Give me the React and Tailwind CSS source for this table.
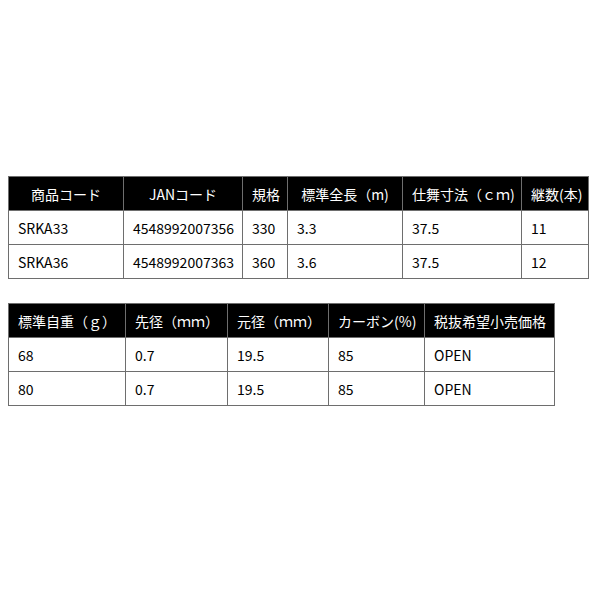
const specs = {
  widths: [115, 119, 45, 115, 119, 67],
  head: ["商品コード", "JANコード", "規格", "標準全長（m)", "仕舞寸法（ｃｍ)", "継数(本)"],
  rows: [
    ["SRKA33", "4548992007356", "330", "3.3", "37.5", "11"],
    ["SRKA36", "4548992007363", "360", "3.6", "37.5", "12"],
  ],
  center: true,
};

const weights = {
  widths: [117, 102, 101, 96, 130],
  head: ["標準自重（ｇ）", "先径（ｍｍ）", "元径（ｍｍ）", "カーボン(%)", "税抜希望小売価格"],
  rows: [
    ["68", "0.7", "19.5", "85", "OPEN"],
    ["80", "0.7", "19.5", "85", "OPEN"],
  ],
  center: false,
};

const SpecTable = ({ data }) => {
  const total = data.widths.reduce((a, b) => a + b, 0) + 1;
  return (
    <table className="table-fixed border-collapse" style={{ width: total }}>
      <colgroup>
        {data.widths.map((w, i) => (
          <col key={i} style={{ width: w }} />
        ))}
      </colgroup>
      <thead>
        <tr className="h-[34px] bg-black text-white">
          {data.head.map(h => (
            <th
              key={h}
              className={`border border-[#6e6e6e] px-[9px] pt-[1px] font-normal whitespace-nowrap ${data.center ? "text-center" : "text-left"}`}
            >
              {h}
            </th>
          ))}
        </tr>
      </thead>
      <tbody>
        {data.rows.map((r, i) => (
          <tr key={i} className="h-[34px] bg-white text-black">
            {r.map((c, j) => (
              <td key={j} className="border border-[#6e6e6e] px-[9px] pt-[1px] text-left whitespace-nowrap">
                {c}
              </td>
            ))}
          </tr>
        ))}
      </tbody>
    </table>
  );
};

const App = () => {
  return (
    <div
      className="w-[600px] h-[600px] bg-white pl-[8px] pt-[176px] text-[14px] leading-none"
      style={{ fontFamily: '"Noto Sans CJK JP", "Noto Sans", sans-serif' }}
    >
      <SpecTable data={specs} />
      <div className="h-[24px]" />
      <SpecTable data={weights} />
    </div>
  );
};

export default App;
